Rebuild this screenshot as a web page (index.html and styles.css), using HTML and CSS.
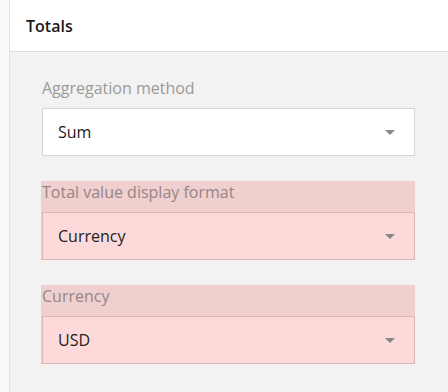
FILE: index.html
```html
<!DOCTYPE html>
<html lang="en">
<head>
    <meta charset="UTF-8">
    <title>Totals</title>
    <link rel="stylesheet" href="styles.css">
</head>
<body>
    <div class="side-strip"></div>

    <div class="panel">
        <div class="panel-header">Totals</div>

        <div class="panel-body">
            <div class="field">
                <div class="field-label">Aggregation method</div>
                <div class="select-box">
                    <span>Sum</span>
                    <span class="caret"></span>
                </div>
            </div>

            <div class="field invalid">
                <div class="field-label">Total value display format</div>
                <div class="select-box">
                    <span>Currency</span>
                    <span class="caret"></span>
                </div>
            </div>

            <div class="field invalid">
                <div class="field-label">Currency</div>
                <div class="select-box">
                    <span>USD</span>
                    <span class="caret"></span>
                </div>
            </div>
        </div>
    </div>
</body>
</html>
```

FILE: styles.css
```css
* {
    box-sizing: border-box;
    font-family: "Open Sans", Arial, sans-serif;
}
body {
    display: flex;
    margin: 0;
    height: 392px;
    background-color: #fafafa;
    overflow: hidden;
}
.side-strip {
    width: 10px;
    border-right: 1px solid #e2e2e2;
    background-color: #fafafa;
}
.panel {
    flex: 1;
    display: flex;
    flex-direction: column;
    background-color: #f2f2f2;
}
.panel-header {
    height: 52px;
    padding: 0 16px;
    display: flex;
    align-items: center;
    background-color: #ffffff;
    border-bottom: 1px solid #dcdcdc;
    font-size: 16px;
    font-weight: 600;
    color: #1a1a1a;
}
.panel-body {
    display: flex;
    flex-direction: column;
    gap: 25px;
    padding: 25px 33px 0 32px;
}
.field-label {
    height: 31px;
    font-size: 16px;
    color: #9a9a9a;
}
.select-box {
    height: 48px;
    padding: 0 19px 0 15px;
    display: flex;
    align-items: center;
    justify-content: space-between;
    background-color: #ffffff;
    border: 1px solid #d6d6d6;
    font-size: 16px;
    color: #222;
}
.caret {
    width: 0;
    height: 0;
    border-left: 5px solid transparent;
    border-right: 5px solid transparent;
    border-top: 5px solid #888;
}
.field.invalid {
    margin-left: -1px;
    padding-left: 1px;
    background-color: #f0cfcf;
}
.field.invalid .field-label {
    color: #968585;
}
.field.invalid .select-box {
    background-color: #fdd9d9;
    border-color: #d9b4b4;
}
```
